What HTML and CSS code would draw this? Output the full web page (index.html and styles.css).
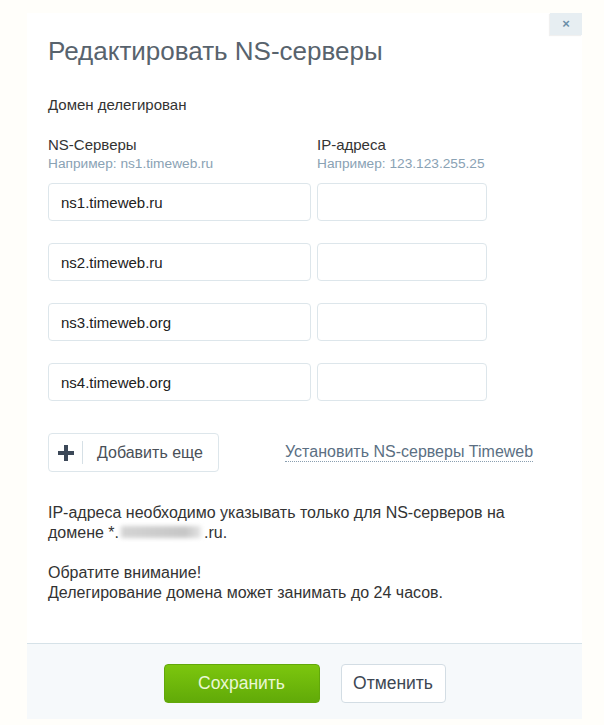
FILE: index.html
```html
<!DOCTYPE html>
<html lang="ru">
    <head>
        <meta charset="UTF-8" />
        <meta name="viewport" content="width=device-width, initial-scale=1.0" />
        <title>Редактировать NS-серверы</title>
        <link rel="stylesheet" href="styles.css">
    </head>
    <body>
        <article class="modal">
            <button type="button" class="close">×</button>

            <div class="modal-body">
                <h2 class="title">Редактировать NS-серверы</h2>
                <p class="status">Домен делегирован</p>

                <div class="ns-grid">
                    <div class="col-head">
                        <div class="label">NS-Серверы</div>
                        <div class="hint">Например: ns1.timeweb.ru</div>
                    </div>
                    <div class="col-head">
                        <div class="label">IP-адреса</div>
                        <div class="hint">Например: 123.123.255.25</div>
                    </div>

                    <input class="field" type="text" value="ns1.timeweb.ru">
                    <input class="field" type="text" value="">
                    <input class="field" type="text" value="ns2.timeweb.ru">
                    <input class="field" type="text" value="">
                    <input class="field" type="text" value="ns3.timeweb.org">
                    <input class="field" type="text" value="">
                    <input class="field" type="text" value="ns4.timeweb.org">
                    <input class="field" type="text" value="">
                </div>

                <div class="actions">
                    <button type="button" class="add">
                        <span class="add-icon">
                            <svg width="18" height="18" viewBox="0 0 18 18">
                                <path d="M7 1h4v6h6v4h-6v6H7v-6H1V7h6z" fill="#3c4858" />
                            </svg>
                        </span>
                        <span class="add-text">Добавить еще</span>
                    </button>
                    <a href="#" class="set-default">Установить NS-серверы Timeweb</a>
                </div>

                <p class="note">
                    IP-адреса необходимо указывать только для NS-серверов на
                    домене *.<span class="blur"></span>.ru.
                </p>
                <p class="note">
                    Обратите внимание!<br>
                    Делегирование домена может занимать до 24 часов.
                </p>
            </div>

            <footer class="modal-footer">
                <button type="button" class="btn save">Сохранить</button>
                <button type="button" class="btn cancel">Отменить</button>
            </footer>
        </article>
    </body>
</html>
```

FILE: styles.css
```css
body {
    margin: 0;
    background-color: #fffefa;
    font-family: "Liberation Sans", Arial, sans-serif;
    color: #333;
}

.modal {
    position: relative;
    width: 555px;
    margin: 13px 0 0 27px;
    background-color: #fff;
}

.close {
    position: absolute;
    top: 0;
    right: 0;
    width: 32px;
    height: 22px;
    padding: 0;
    border: 0;
    background-color: #e7eef2;
    box-shadow: -1px 1px 1px rgba(0, 0, 0, 0.06);
    color: #6b8ea8;
    font-family: inherit;
    font-size: 13px;
    font-weight: bold;
    line-height: 22px;
}

.modal-body {
    padding: 22px 21px 40px;
}

.title {
    margin: 0;
    font-size: 26px;
    font-weight: normal;
    line-height: 32px;
    color: #58636d;
}

.status {
    margin: 29px 0 0;
    font-size: 15px;
    line-height: 18px;
}

.ns-grid {
    display: grid;
    grid-template-columns: 263px 170px;
    column-gap: 6px;
    row-gap: 22px;
    margin-top: 22px;
}

.col-head {
    margin-bottom: -11px;
}

.label {
    font-size: 15px;
    line-height: 18px;
}

.hint {
    margin-top: 2px;
    font-size: 13.7px;
    line-height: 16px;
    color: #8aa2b4;
}

.field {
    box-sizing: border-box;
    height: 38px;
    padding: 0 12px;
    border: 1px solid #dde6eb;
    border-radius: 4px;
    font-family: inherit;
    font-size: 15px;
    color: #222;
    background-color: #fff;
}

.actions {
    display: flex;
    align-items: center;
    margin-top: 32px;
}

.add {
    display: flex;
    align-items: center;
    box-sizing: border-box;
    width: 171px;
    height: 39px;
    padding: 0;
    border: 1px solid #dde6eb;
    border-radius: 4px;
    background-color: #fff;
    font-family: inherit;
}

.add-icon {
    display: flex;
    align-items: center;
    height: 23px;
    padding: 0 7px 0 8px;
    border-right: 1px solid #d6e0e6;
}

.add-text {
    padding-left: 14px;
    font-size: 16px;
    color: #4a5058;
}

.set-default {
    margin-left: 66px;
    font-size: 16px;
    color: #5b6f83;
    text-decoration: none;
    border-bottom: 1px dotted #8a9fb0;
    line-height: 18px;
}

.note {
    margin: 31px 0 0;
    font-size: 16px;
    line-height: 20px;
    color: #333;
}

.note + .note {
    margin-top: 20px;
}

.blur {
    display: inline-block;
    width: 80px;
    height: 12px;
    margin: 0 3px 0 2px;
    vertical-align: 0;
    background: linear-gradient(90deg, #d4d4d4, #c6c6c6 80%, #e4e4e4);
    filter: blur(2px);
}

.modal-footer {
    display: flex;
    justify-content: center;
    gap: 21px;
    padding: 20px 0 16px;
    border-top: 1px solid #d6e2e8;
    background-color: #f6f9fb;
}

.btn {
    height: 39px;
    border-radius: 4px;
    font-family: inherit;
    font-size: 17.5px;
}

.save {
    width: 156px;
    border: 1px solid #62a80a;
    background: linear-gradient(#7cc60e, #61aa08);
    color: #eaf7d6;
}

.cancel {
    width: 105px;
    border: 1px solid #d3dde4;
    background-color: #fff;
    color: #3d4753;
}
```
